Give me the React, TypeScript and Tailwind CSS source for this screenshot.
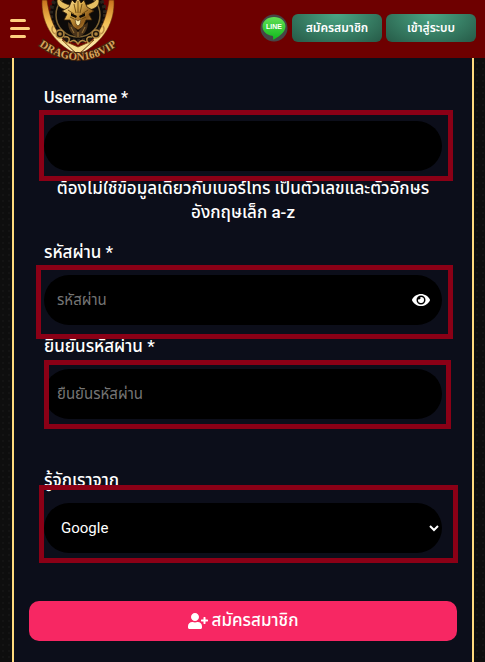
import React, { useState } from 'react';
import { FaEye, FaUserPlus } from 'react-icons/fa';

const inputClass =
  'block w-full h-[50px] rounded-full bg-black pl-[13px] pr-12 text-[15px] text-white placeholder:text-[#757575] outline-none';
const labelClass = 'block leading-6 mb-[11px] font-medium';
const headerButtonClass =
  'w-[90px] h-7 rounded-md bg-[radial-gradient(ellipse_at_top,#4aa685,#265a47)] text-xs font-semibold';

const DragonLogo: React.FC = () => (
  <svg viewBox="0 0 84 64" className="w-[84px] h-16 shrink-0" role="img" aria-label="Dragon168VIP">
    <defs>
      <linearGradient id="gold" x1="0" y1="0" x2="1" y2="1">
        <stop offset="0" stopColor="#fff0b4" />
        <stop offset="0.4" stopColor="#dcae4c" />
        <stop offset="0.7" stopColor="#8d5a1a" />
        <stop offset="1" stopColor="#f0c25e" />
      </linearGradient>
      <linearGradient id="rim" x1="0" y1="0" x2="0" y2="1">
        <stop offset="0" stopColor="#c8701c" />
        <stop offset="0.4" stopColor="#f0bd52" />
        <stop offset="1" stopColor="#fff4c4" />
      </linearGradient>
      <path id="ribbon" d="M5 47 Q42 73 79 47" />
    </defs>
    <circle cx="42" cy="15" r="28" fill="#0d0b09" />
    <circle cx="42" cy="14" r="27" fill="none" stroke="#2a231b" strokeWidth="4" strokeDasharray="3 2" />
    <circle cx="42" cy="15" r="22" fill="none" stroke="#7d6334" strokeWidth="1.5" />
    {/* outer blades */}
    <path d="M6 0 C5 20 14 42 42 55 C28 42 15 30 11 0Z" fill="url(#rim)" stroke="#5c2606" strokeWidth="0.6" />
    <path d="M78 0 C79 20 70 42 42 55 C56 42 69 30 73 0Z" fill="url(#rim)" stroke="#5c2606" strokeWidth="0.6" />
    <path d="M26 40 L42 47 L58 40 L42 55Z" fill="#f7db8e" stroke="#6d420f" strokeWidth="0.8" />
    {/* scrollwork */}
    <g fill="#241a0e" stroke="#b58a42" strokeWidth="1.5">
      <circle cx="24" cy="34" r="4" />
      <circle cx="60" cy="34" r="4" />
      <circle cx="24" cy="34" r="1" />
      <circle cx="60" cy="34" r="1" />
      <path d="M17 26c-2 3-1 6 2 8M67 26c2 3 1 6-2 8" fill="none" />
      <path d="M28 37c4-1 6 1 5 4s-5 2-4 0M56 37c-4-1-6 1-5 4s5 2 4 0M34 42c4-3 6-1 8 2 2-3 4-5 8-2" />
    </g>
    {/* horns */}
    <path d="M32 10 C23 9 19 4 22 -3 C25 3 31 4 36 6ZM52 10 C61 9 65 4 62 -3 C59 3 53 4 48 6Z" fill="#e6bf62" stroke="#3d260a" strokeWidth="0.7" />
    {/* head */}
    <path d="M33 7 L36 0 L39 3 L42 -3 L45 3 L48 0 L51 7 L58 11 L53 14 L56 20 L50 20 L47 27 L42 30 L37 27 L34 20 L28 20 L31 14 L26 11Z" fill="url(#gold)" stroke="#352007" strokeWidth="0.8" />
    <path d="M42 1v12M38 4l2 9M46 4l-2 9M32 10l6 4M52 10l-6 4M34 17l4 2M50 17l-4 2" stroke="#5c3c0d" strokeWidth="0.8" />
    <path d="M35 13l6 3-1 2-5-2ZM49 13l-6 3 1 2 5-2Z" fill="#120b03" />
    <path d="M39 19l3 2 3-2-1 5-2 2-2-2Z" fill="#f8e6a5" stroke="#382008" strokeWidth="0.5" />
    <path d="M32 22c0 8 4 13 10 16 6-3 10-8 10-16l-5 4-5 6-5-6Z" fill="#49331a" />
    <path d="M35 27l3 6M42 32v5M49 27l-3 6" stroke="#b3863e" strokeWidth="0.8" />
    <text fontFamily="Liberation Serif, serif" fontSize="11" fontWeight="700" fill="#d9a25c" stroke="#43240c" strokeWidth="2" paintOrder="stroke" textAnchor="middle">
      <textPath href="#ribbon" startOffset="50%">DRAGON168VIP</textPath>
    </text>
  </svg>
);

const LineIcon: React.FC = () => (
  <svg viewBox="0 0 28 28" className="size-7">
    <defs>
      <linearGradient id="line-green" x1="0" y1="0" x2="0" y2="1">
        <stop offset="0" stopColor="#62df55" />
        <stop offset="1" stopColor="#10b91d" />
      </linearGradient>
    </defs>
    <circle cx="14" cy="14" r="13.5" fill="#464646" />
    <path d="M14 3C7.5 3 2.5 7.2 2.5 12.4c0 5 4.5 8.6 9.8 9.4 1.2.3.9 2.2.7 4 4-2 12.500-7 12.500-13.400C25.500 7.200 20.500 3 14 3Z" fill="url(#line-green)" />
    <text x="14" y="15" textAnchor="middle" fontFamily="Liberation Sans, sans-serif" fontSize="7" fontWeight="700" fill="#fff">LINE</text>
  </svg>
);

// red marker drawn around a field, offsets come from the caller
const Marker: React.FC<{ className: string }> = ({ className }) => (
  <div className={`absolute z-10 border-[5px] border-[#8b0016] pointer-events-none ${className}`} />
);

const App: React.FC = () => {
  const [showPassword, setShowPassword] = useState(false);

  return (
    <div className="min-h-screen flex flex-col bg-[#0e0e0e] bg-[radial-gradient(#141414_1px,#0e0e0e_1px)] bg-[size:6px_6px] text-white font-['Roboto','Noto_Sans_Thai','Noto_Sans',sans-serif]">
      <header className="relative z-20 h-[58px] flex items-start bg-[#6e0000] pl-2.5 pr-[9px]">
        <button type="button" aria-label="Menu" className="flex flex-col gap-[5px] w-5 mt-[19px] mr-[6px]">
          <span className="h-[3px] w-4 rounded-full bg-[#fdcf7f]" />
          <span className="h-[3px] w-5 rounded-full bg-[#fdcf7f]" />
          <span className="h-[3px] w-4 rounded-full bg-[#fdcf7f]" />
        </button>
        <DragonLogo />
        <div className="ml-auto mt-3.5 flex gap-1">
          <a href="#line" aria-label="LINE">
            <LineIcon />
          </a>
          <button type="button" className={headerButtonClass}>สมัครสมาชิก</button>
          <button type="button" className={headerButtonClass}>เข้าสู่ระบบ</button>
        </div>
      </header>

      <main className="flex-1 ml-3 mr-[11px] border-x-2 border-[#ffdb7d] bg-[#0c0e1a] px-[15px] pt-7 pb-[21px]">
        <form onSubmit={e => e.preventDefault()}>
          <div className="px-[15px]">
            <label htmlFor="username" className={`${labelClass} text-base`}>Username *</label>
            <div className="relative">
              <input id="username" type="text" className={inputClass} />
              <Marker className="-left-[5px] -top-[11px] -right-[11px] -bottom-[10px]" />
            </div>
            <p className="mt-[5px] text-center text-[17px] leading-6 font-medium">
              ต้องไม่ใช้ข้อมูลเดียวกับเบอร์โทร เป็นตัวเลขและตัวอักษร<wbr />อังกฤษเล็ก a-z
            </p>

            <label htmlFor="password" className={`${labelClass} text-[17px] mt-4`}>รหัสผ่าน *</label>
            <div className="relative">
              <input id="password" type={showPassword ? 'text' : 'password'} placeholder="รหัสผ่าน" className={inputClass} />
              <button
                type="button"
                aria-label="Show password"
                onClick={() => setShowPassword(prev => !prev)}
                className="absolute right-3 inset-y-0 flex items-center"
              >
                <FaEye size={18} />
              </button>
              <Marker className="-left-2 -top-[10px] -right-[11px] -bottom-[14px]" />
            </div>

            <label htmlFor="confirm" className={`${labelClass} text-[17px] mt-[9px]`}>ยืนยันรหัสผ่าน *</label>
            <div className="relative">
              <input id="confirm" type="password" placeholder="ยืนยันรหัสผ่าน" className={inputClass} />
              <Marker className="left-0 -top-[9px] -right-[9px] -bottom-[10px]" />
            </div>

            <label htmlFor="source" className={`${labelClass} text-[17px] mt-[49px]`}>รู้จักเราจาก</label>
            <div className="relative">
              <select id="source" defaultValue="Google" className="block w-full h-[50px] rounded-full bg-black pl-[13px] text-[15px] text-white font-['Roboto',sans-serif] outline-none">
                <option>Google</option>
                <option>Facebook</option>
                <option>LINE</option>
              </select>
              <Marker className="-left-[5px] -top-[18px] -right-4 -bottom-[10px]" />
            </div>
          </div>

          <button type="submit" className="mt-12 w-full h-10 rounded-[10px] bg-[#f72763] flex items-center justify-center gap-1 text-[17px] font-medium">
            <FaUserPlus size={20} />
            สมัครสมาชิก
          </button>
        </form>
      </main>
    </div>
  );
};

export default App;
